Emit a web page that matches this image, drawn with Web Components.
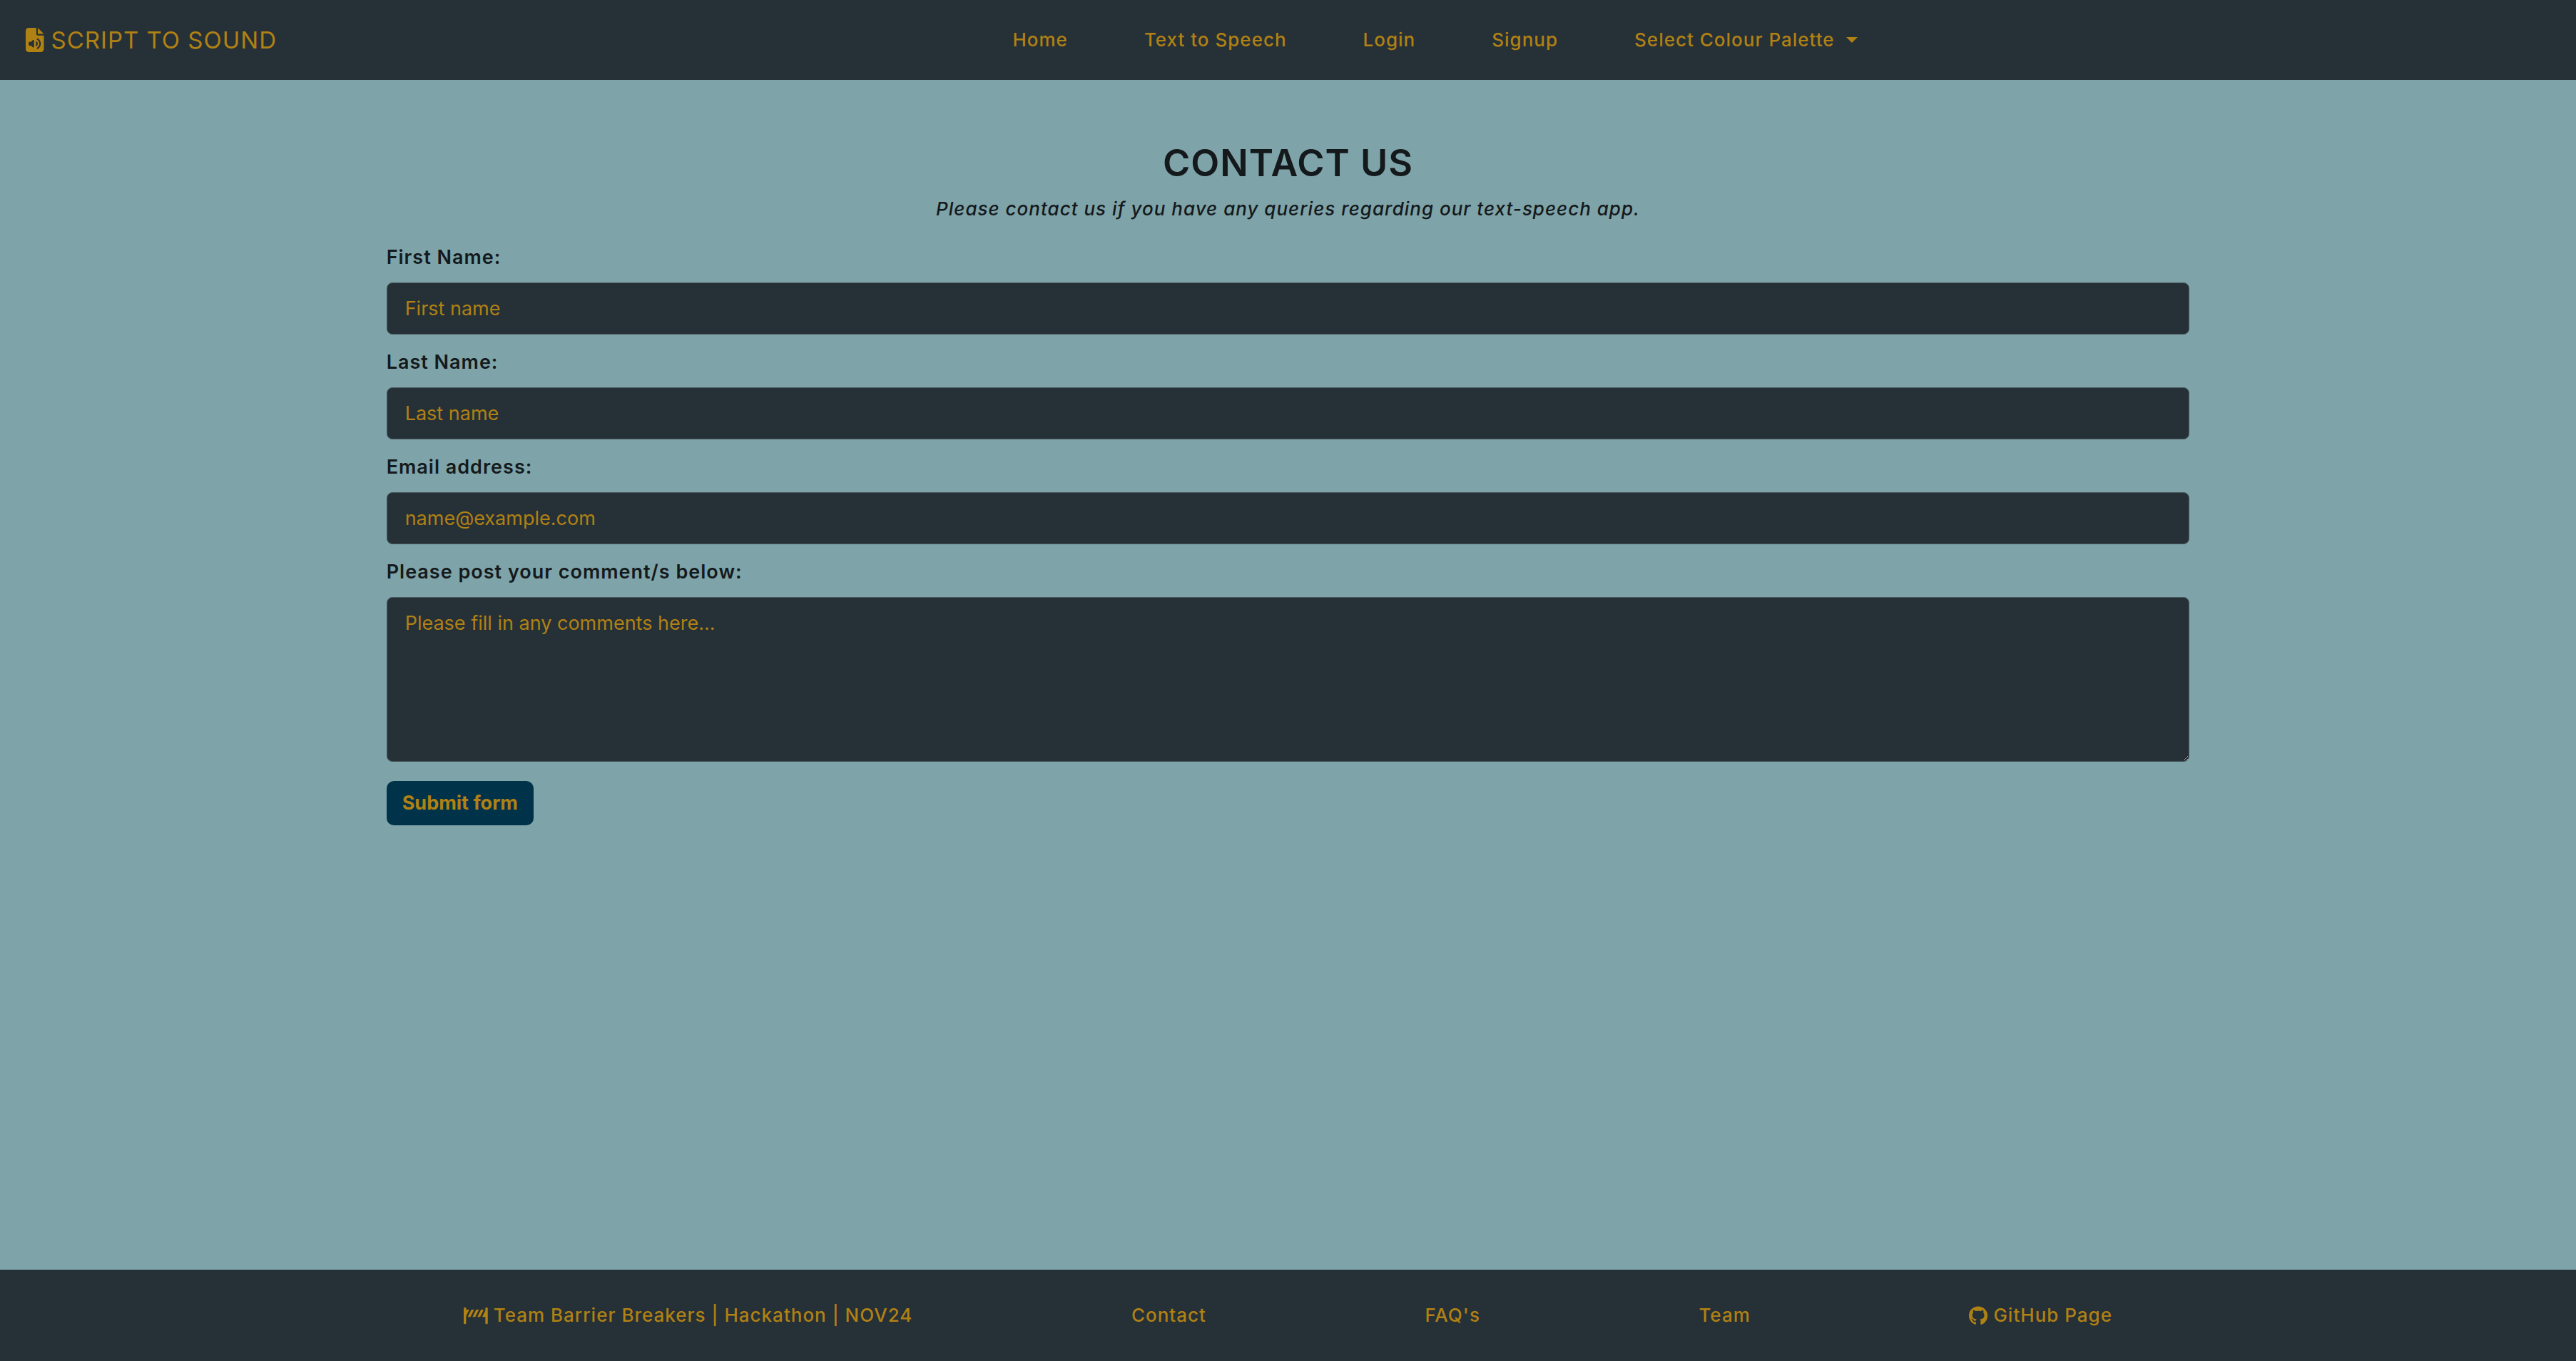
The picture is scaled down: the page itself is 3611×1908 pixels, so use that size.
<!DOCTYPE html>
<html lang="en">
<head>
<meta charset="utf-8">
<meta name="viewport" content="width=device-width, initial-scale=1">
<title>Script to Sound - Contact</title>
<style>
  :root {
    --bar: #263037;
    --page: #7ea4a9;
    --gold: #b08113;
    --ink: #14191c;
    --button: #003349;
  }
  body { margin: 0; font-family: Inter, "Liberation Sans", sans-serif; font-size: 26px; line-height: 42px; letter-spacing: 1px; color: var(--ink); background: var(--page); }
</style>
</head>
<body>
<sound-app></sound-app>
<script>
const define = (name, html, setup) => customElements.define(name, class extends HTMLElement {
  connectedCallback() {
    if (this.shadowRoot) return;
    this.attachShadow({ mode: 'open' }).innerHTML = html;
    if (setup) setup(this, this.shadowRoot);
  }
});

const icons = {
  audio: ['0 0 384 512', 'M64 0C28.7 0 0 28.7 0 64V448c0 35.3 28.7 64 64 64H320c35.3 0 64-28.7 64-64V160H256c-17.7 0-32-14.3-32-32V0H64zM256 0V128H384L256 0zm2 226.3c37.1 22.4 62 63.1 62 109.7s-24.9 87.3-62 109.7c-7.6 4.6-17.4 2.1-22-5.4s-2.1-17.4 5.4-22C269.4 401.5 288 370.9 288 336s-18.6-65.5-46.5-82.3c-7.6-4.6-10-14.4-5.4-22s14.4-10 22-5.4zm-91.9 30.9c6 2.5 9.9 8.3 9.9 14.8V400c0 6.5-3.9 12.3-9.9 14.8s-12.9 1.1-17.4-3.5L113.4 376H80c-8.8 0-16-7.2-16-16V312c0-8.8 7.2-16 16-16h33.4l35.3-35.3c4.6-4.6 11.5-5.9 17.4-3.5zm51 34.9c6.6-5.9 16.7-5.3 22.6 1.3C249.8 304.6 256 319.6 256 336s-6.2 31.4-16.3 42.7c-5.9 6.6-16 7.1-22.6 1.3s-7.1-16-1.3-22.6c5.1-5.7 8.1-13.1 8.1-21.3s-3.1-15.7-8.1-21.3c-5.9-6.6-5.3-16.7 1.3-22.6z'],
  barrier: ['0 0 640 512', 'M32 32C14.3 32 0 46.3 0 64V448c0 17.7 14.3 32 32 32s32-14.3 32-32V266.3L149.2 96H64V64c0-17.7-14.3-32-32-32zM405.2 96H330.8l-5.4 10.7L234.8 288h74.3l5.4-10.7L405.2 96zM362.8 288h74.3l5.4-10.7L533.2 96H458.8l-5.4 10.7L362.8 288zM202.8 96l-5.4 10.7L106.8 288h74.3l5.4-10.7L277.2 96H202.8zm288 192H576V448c0 17.7 14.3 32 32 32s32-14.3 32-32V64c0-17.7-14.3-32-32-32s-32 14.3-32 32v53.7L490.8 288z'],
  github: ['0 0 496 512', 'M165.9 397.4c0 2-2.3 3.6-5.2 3.6-3.3.3-5.6-1.3-5.6-3.6 0-2 2.3-3.6 5.2-3.6 3-.3 5.6 1.3 5.6 3.6zm-31.1-4.5c-.7 2 1.3 4.3 4.3 4.9 2.6 1 5.6 0 6.2-2s-1.3-4.3-4.3-5.2c-2.6-.7-5.5.3-6.2 2.3zm44.2-1.7c-2.9.7-4.9 2.6-4.6 4.9.3 2 2.9 3.3 5.9 2.6 2.9-.7 4.9-2.6 4.6-4.6-.3-1.9-3-3.2-5.9-2.9zM244.8 8C106.1 8 0 113.3 0 252c0 110.9 69.8 205.8 169.5 239.2 12.8 2.3 17.3-5.6 17.3-12.1 0-6.2-.3-40.4-.3-61.4 0 0-70 15-84.7-29.8 0 0-11.4-29.1-27.8-36.6 0 0-22.9-15.7 1.6-15.4 0 0 24.9 2 38.6 25.8 21.9 38.6 58.6 27.5 72.9 20.9 2.3-16 8.8-27.1 16-33.7-55.9-6.2-112.3-14.3-112.3-110.5 0-27.5 7.6-41.3 23.6-58.9-2.6-6.5-11.1-33.3 2.6-67.9 20.9-6.5 69 27 69 27 20-5.6 41.5-8.5 62.8-8.5s42.8 2.9 62.8 8.5c0 0 48.1-33.6 69-27 13.7 34.7 5.2 61.4 2.6 67.9 16 17.7 25.8 31.5 25.8 58.9 0 96.5-58.9 104.2-114.8 110.5 9.2 7.9 17 22.9 17 46.4 0 33.7-.3 75.4-.3 83.6 0 6.5 4.6 14.4 17.3 12.1C428.2 457.8 496 362.9 496 252 496 113.3 383.5 8 244.8 8z']
};
define('app-icon', `<style>
  :host { display: inline-flex; flex: none; }
  svg { display: block; fill: currentColor; height: var(--icon-size, 27px); width: auto; }
</style><svg aria-hidden="true"><path/></svg>`, (el, root) => {
  const [box, d] = icons[el.getAttribute('name')];
  root.querySelector('svg').setAttribute('viewBox', box);
  root.querySelector('path').setAttribute('d', d);
});

define('nav-link', `<style>
  :host { display: block; font-weight: 500; }
  a { display: flex; align-items: center; gap: var(--link-gap, 8px); color: var(--gold); text-decoration: none; white-space: nowrap; }
</style><a href="#"><slot></slot></a>`, (el, root) => {
  root.querySelector('a').href = el.getAttribute('href') || '#';
});

define('palette-menu', `<style>
  :host { display: block; font-weight: 500; }
  button { display: flex; align-items: center; gap: 16px; padding: 0; border: 0; background: none; color: var(--gold); font: inherit; letter-spacing: inherit; white-space: nowrap; }
  button::after { content: ""; border: 8px solid transparent; border-top-color: currentColor; border-bottom: 0; }
</style><button type="button" aria-haspopup="true" aria-expanded="false"><slot></slot></button>`);

define('site-header', `<style>
  :host { display: block; background: var(--bar); }
  header { display: flex; align-items: center; gap: 24px; box-sizing: border-box; min-height: 112px; padding-left: 36px; }
  .brand { font-size: 33px; font-weight: 400; --icon-size: 34px; --link-gap: 10px; }
  nav { flex: 1; display: flex; justify-content: center; gap: 107px; }
</style><header>
  <nav-link class="brand" href="#home"><app-icon name="audio"></app-icon>SCRIPT TO SOUND</nav-link>
  <nav aria-label="Main">
    <nav-link href="#home">Home</nav-link>
    <nav-link href="#speech">Text to Speech</nav-link>
    <nav-link href="#login">Login</nav-link>
    <nav-link href="#signup">Signup</nav-link>
    <palette-menu>Select Colour Palette</palette-menu>
  </nav>
</header>`);

define('form-field', `<style>
  :host { display: block; font-size: 27px; }
  label { display: block; font-weight: 600; margin-bottom: 14px; }
  input, textarea { display: block; box-sizing: border-box; width: 100%; margin: 0; padding: 15px 25px; border: 1px solid #4a5960; border-radius: 8px; background: var(--bar); color: var(--gold); font: inherit; line-height: 41px; letter-spacing: 0; outline: 0; }
  input { height: 73px; }
  textarea { height: 231px; resize: vertical; }
  ::placeholder { color: var(--gold); opacity: 1; }
</style><label for="control"></label>`, (el, root) => {
  const long = el.hasAttribute('multiline');
  const control = document.createElement(long ? 'textarea' : 'input');
  control.id = 'control';
  if (!long) control.type = el.getAttribute('type') || 'text';
  control.placeholder = el.getAttribute('placeholder');
  root.querySelector('label').textContent = el.getAttribute('label');
  root.append(control);
});

define('contact-form', `<style>
  :host { display: block; box-sizing: border-box; width: 70%; margin: 0 auto; padding-top: 86px; }
  h1 { margin: 0; font-size: 52px; line-height: 62px; font-weight: 600; text-align: center; }
  p { margin: 12px 0 26px; font-style: italic; font-weight: 500; text-align: center; }
  form { display: flex; flex-direction: column; gap: 18px; }
  button { align-self: flex-start; margin-top: 9px; padding: 10px 22px; border: 0; border-radius: 10px; background: var(--button); color: var(--gold); font: inherit; font-size: 27px; font-weight: 700; letter-spacing: 0; }
</style>
<h1>CONTACT US</h1>
<p>Please contact us if you have any queries regarding our text-speech app.</p>
<form>
  <form-field label="First Name:" placeholder="First name"></form-field>
  <form-field label="Last Name:" placeholder="Last name"></form-field>
  <form-field label="Email address:" type="email" placeholder="name@example.com"></form-field>
  <form-field label="Please post your comment/s below:" multiline placeholder="Please fill in any comments here..."></form-field>
  <button type="submit">Submit form</button>
</form>`);

define('site-footer', `<style>
  :host { display: block; background: var(--bar); }
  footer { display: flex; align-items: center; justify-content: space-between; box-sizing: border-box; min-height: 128px; padding: 0 18%; }
</style><footer>
  <nav-link href="#team"><app-icon name="barrier"></app-icon>Team Barrier Breakers | Hackathon | NOV24</nav-link>
  <nav-link href="#contact">Contact</nav-link>
  <nav-link href="#faq">FAQ's</nav-link>
  <nav-link href="#members">Team</nav-link>
  <nav-link href="#github"><app-icon name="github"></app-icon>GitHub Page</nav-link>
</footer>`);

define('sound-app', `<style>
  :host { display: flex; flex-direction: column; min-height: 100vh; }
  main { flex: 1; }
</style>
<site-header></site-header>
<main><contact-form></contact-form></main>
<site-footer></site-footer>`);
</script>
</body>
</html>
